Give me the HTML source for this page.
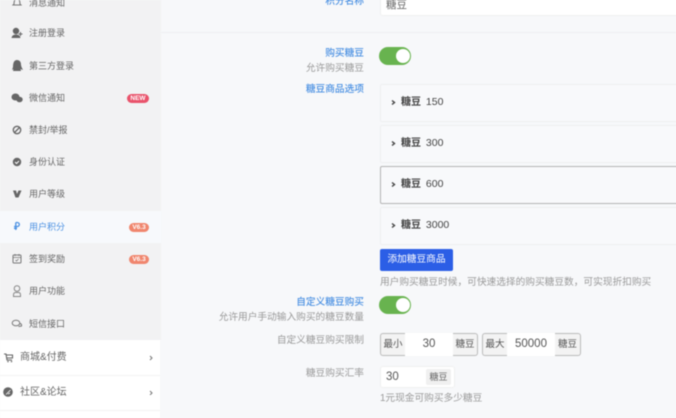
<!DOCTYPE html>
<html lang="zh"><head><meta charset="utf-8"><style>
html,body{margin:0;padding:0}
body{width:676px;height:418px;overflow:hidden;position:relative;background:#f7f8fa;font-family:"Liberation Sans","Noto Sans CJK SC",sans-serif;color:#666}
.a{position:absolute;white-space:nowrap}
#w{position:absolute;left:0;top:0;width:676px;height:418px;filter:blur(.45px)}
.m{left:29px;font-size:9px;line-height:14px;color:#666}
.r{text-align:right;right:312px;font-size:9.7px;line-height:14px;color:#999}
.b{color:#4a90e2;font-weight:500}
.tag{left:128px;width:21px;height:9px;border-radius:5px;background:#f0866e;color:#fff;font-size:6.5px;line-height:9px;text-align:center;font-weight:bold}
.p{left:380px;width:300px;height:36px;box-sizing:border-box;border:1px solid #eeeff1;background:#f8f9fb;border-radius:2px}
.t{left:401px;font-size:10.5px;line-height:14px;color:#444}
.t b{color:#444;margin-right:2px;font-size:10px}
.g{height:23px;box-sizing:border-box;border:1px solid #bbb;background:#f3f3f3;border-radius:3px;font-size:9.5px;line-height:21px;text-align:center;color:#555}
.gl{border-right:0;border-radius:3px 0 0 3px}
.gr{border-left:0;border-radius:0 3px 3px 0}
.v{height:23px;background:#fff;font-size:11.5px;line-height:22px;text-align:center;color:#555}
</style></head><body><div id="w">
<div class="a" style="left:0;top:0;width:161px;height:340px;background:#f2f2f3"></div>
<div class="a" style="left:0;top:211px;width:161px;height:32px;background:#f7f9fc"></div>
<div class="a" style="left:0;top:340px;width:160px;height:78px;background:#fff"></div>
<div class="a" style="left:0;top:375px;width:160px;height:1px;background:#f3f3f3"></div>
<div class="a" style="left:0;top:410px;width:160px;height:1px;background:#f3f3f3"></div>
<div class="a" style="left:161px;top:32px;width:515px;height:1px;background:#eeeff1"></div>

<svg class="a" style="left:0;top:0" width="30" height="418" viewBox="0 0 30 418">
<path d="M14 4 Q14 -1 17 -2 Q20 -1 20 4 L21 5 H13Z" fill="none" stroke="#777"/>
<circle cx="16" cy="31" r="3.200" fill="#666"/><path d="M11.500 38 Q12 34.500 16 34.500 Q20 34.500 20.500 38Z" fill="#666"/><path d="M18.500 34h4M20.500 32v4" stroke="#666"/>
<path d="M17 60 Q21 60 21 65 L21.500 67 L23 70 L20.500 69 L21 71 H13 L13.500 69 L12 70 L13 67 Q13 60 17 60Z" fill="#666"/>
<ellipse cx="15.500" cy="97" rx="4" ry="3.500" fill="#666"/><ellipse cx="19.500" cy="99.500" rx="3.200" ry="2.800" fill="#666"/>
<circle cx="17" cy="130" r="3.700" fill="none" stroke="#666" stroke-width="1.300"/><path d="M14.500 132.500 19.500 127.500" stroke="#666" stroke-width="1.300"/>
<circle cx="17" cy="162" r="4.200" fill="#666"/><path d="M15 162l1.500 1.500 2.500-2.500" fill="none" stroke="#fff"/>
<path d="M13 190.500h3l1 3.500 1.500-3.500h3l-3 7h-3Z" fill="#666"/>
<path d="M15.800 222.500v7.500M14 226.500h3.500M14 228.300h3M15.800 222.500h1.500a2 2 0 0 1 0 4" fill="none" stroke="#4a90e2" stroke-width="1.300"/>
<rect x="13" y="255" width="8" height="8" rx="1" fill="none" stroke="#777"/><path d="M13 257.500h8M15 254v2M19 254v2M15.500 260l1 1 2-2" fill="none" stroke="#777" stroke-width=".8"/>
<circle cx="17" cy="288.500" r="2.800" fill="none" stroke="#888"/><path d="M13.500 296.500v-1.500q0-2.500 2-2.500h3q2 0 2 2.500v1.500Z" fill="none" stroke="#888"/>
<ellipse cx="16" cy="323" rx="3.800" ry="2.800" fill="none" stroke="#777"/><path d="M20 323.500q2 .5 1.500 2.500l-3 .5" fill="none" stroke="#777"/>
<path d="M4 354h2l1 6h5M6 355h6.500v3H7" fill="none" stroke="#666" stroke-width="1.100"/><circle cx="8" cy="361.500" r=".8" fill="#666"/><circle cx="11.500" cy="361.500" r=".8" fill="#666"/>
<circle cx="8" cy="392" r="4.800" fill="#666"/><path d="M6 394.500 10.500 390M8 394l2-1" stroke="#fff" stroke-width=".8"/>
</svg>

<div class="a m" style="top:-4px">消息通知</div>
<div class="a m" style="top:26px">注册登录</div>
<div class="a m" style="top:59px">第三方登录</div>
<div class="a m" style="top:91px">微信通知</div>
<div class="a m" style="top:123px">禁封/举报</div>
<div class="a m" style="top:155px">身份认证</div>
<div class="a m" style="top:187px">用户等级</div>
<div class="a m" style="top:220px;color:#4a90e2">用户积分</div>
<div class="a m" style="top:252px">签到奖励</div>
<div class="a m" style="top:284px">用户功能</div>
<div class="a m" style="top:317px">短信接口</div>
<div class="a" style="left:20px;top:351px;font-size:10px;line-height:14px;color:#666">商城&amp;付费</div>
<div class="a" style="left:20px;top:386px;font-size:10px;line-height:14px;color:#666">社区&amp;论坛</div>
<svg class="a" style="left:149px;top:355px" width="5" height="40" viewBox="0 0 5 40"><g fill="none" stroke="#777" stroke-width="1"><path d="M1 1l2 2-2 2"/><path d="M1 36l2 2-2 2"/></g></svg>
<div class="a tag" style="left:127px;top:94px;width:22px;height:9px;background:#e9536b">NEW</div>
<div class="a tag" style="left:129px;top:223px;width:20px">V6.3</div>
<div class="a tag" style="left:129px;top:255px;width:20px">V6.3</div>

<div class="a r b" style="top:-5px">积分名称</div>
<div class="a" style="left:380px;top:-8px;width:300px;height:24px;background:#fff;border-radius:3px;border:1px solid #f0f0f0;box-sizing:border-box"></div>
<div class="a" style="left:386px;top:-2px;font-size:10.500px;line-height:14px;color:#666">糖豆</div>

<div class="a r b" style="top:47px">购买糖豆</div>
<div class="a r" style="top:62px">允许购买糖豆</div>
<div class="a r b" style="top:83px">糖豆商品选项</div>
<div class="a" style="left:379px;top:47px;width:32px;height:18px;background:#68b34f;border-radius:9px"></div>
<div class="a" style="left:396px;top:49px;width:14px;height:14px;background:#fff;border-radius:7px"></div>

<div class="a p" style="top:84px;height:38px"></div>
<div class="a p" style="top:125px;height:38px"></div>
<div class="a p" style="top:166px;height:38px;border-color:#b4b4b4"></div>
<div class="a p" style="top:207px;height:38px"></div>
<svg class="a" style="left:390px;top:0" width="6" height="240" viewBox="0 0 6 240"><g fill="none" stroke="#444" stroke-width="1.400"><path d="M2 100.500l2.500 2L2 104.500"/><path d="M2 141.500l2.500 2L2 145.500"/><path d="M2 182.500l2.500 2L2 186.500"/><path d="M2 223.500l2.500 2L2 227.500"/></g></svg>
<div class="a t" style="top:95px"><b>糖豆</b> 150</div>
<div class="a t" style="top:136px"><b>糖豆</b> 300</div>
<div class="a t" style="top:177px"><b>糖豆</b> 600</div>
<div class="a t" style="top:218px"><b>糖豆</b> 3000</div>

<div class="a" style="left:380px;top:249px;width:73px;height:22px;background:#2b5ee6;border-radius:2px;color:#fff;font-size:9.700px;line-height:21px;text-align:center">添加糖豆商品</div>
<div class="a" style="left:380px;top:276px;font-size:9.700px;line-height:14px;color:#999">用户购买糖豆时候，可快速选择的购买糖豆数，可实现折扣购买</div>

<div class="a r b" style="top:296px">自定义糖豆购买</div>
<div class="a r" style="top:311px">允许用户手动输入购买的糖豆数量</div>
<div class="a" style="left:379px;top:296px;width:32px;height:18px;background:#68b34f;border-radius:9px"></div>
<div class="a" style="left:396px;top:298px;width:14px;height:14px;background:#fff;border-radius:7px"></div>

<div class="a r" style="top:334px">自定义糖豆购买限制</div>
<div class="a g gl" style="left:380px;top:333px;width:25px">最小</div>
<div class="a v" style="left:405px;top:333px;width:48px">30</div>
<div class="a g gr" style="left:453px;top:333px;width:25px">糖豆</div>
<div class="a g gl" style="left:482px;top:333px;width:25px">最大</div>
<div class="a v" style="left:507px;top:333px;width:48px">50000</div>
<div class="a g gr" style="left:555px;top:333px;width:26px">糖豆</div>

<div class="a r" style="top:367px">糖豆购买汇率</div>
<div class="a" style="left:380px;top:366px;width:75px;height:22px;background:#fff;border:1px solid #f0f0f0;border-radius:3px;box-sizing:border-box"></div>
<div class="a" style="left:386px;top:369px;font-size:11.500px;line-height:16px;color:#555">30</div>
<div class="a" style="left:426px;top:369px;width:25px;height:16px;background:#f0f0f0;border-radius:2px;font-size:9px;line-height:16px;text-align:center;color:#666">糖豆</div>
<div class="a" style="left:380px;top:392px;font-size:9.700px;line-height:14px;color:#999">1元现金可购买多少糖豆</div>
</div></body></html>
